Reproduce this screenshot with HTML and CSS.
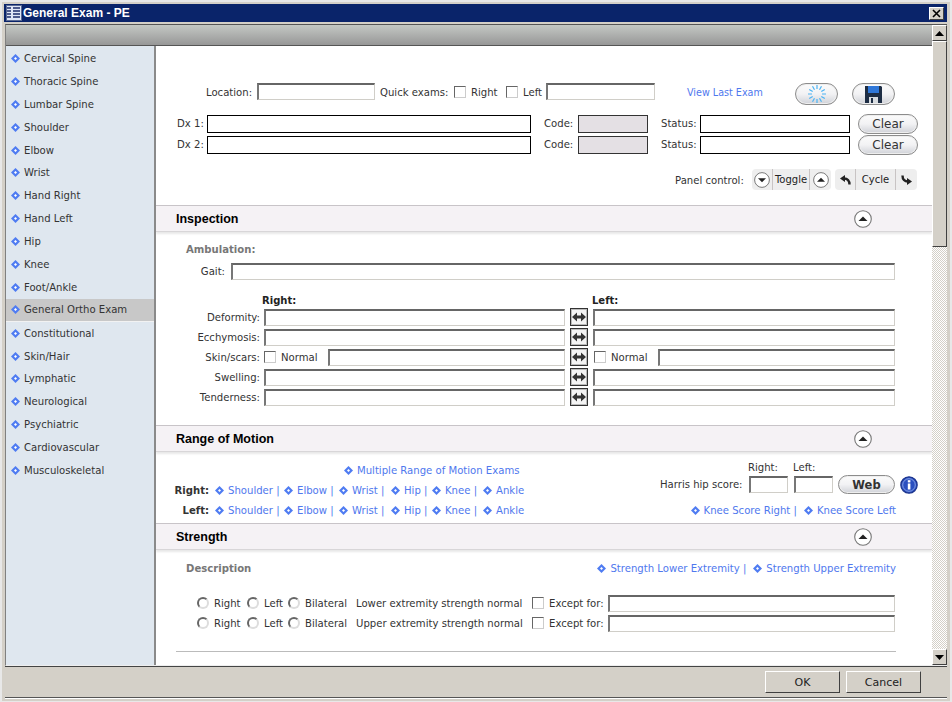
FILE: index.html
```html
<!DOCTYPE html>
<html lang="en">
<head>
  <meta charset="UTF-8" />
  <title>General Exam - PE</title>
  <link rel="stylesheet" href="styles.css">
</head>
<body>
  <svg class="defs" width="0" height="0">
    <symbol id="dia" viewBox="0 0 9 9">
      <path d="M4.5 0 9 4.5 4.5 9 0 4.5z" fill="#4f7cf2"/>
      <path d="M4.5 3 6 4.5 4.5 6 3 4.5z" fill="#fff"/>
    </symbol>
    <symbol id="up" viewBox="0 0 18 18">
      <circle cx="9" cy="9" r="8.3" fill="#fff" stroke="#777" stroke-width="1.1"/>
      <path d="M4.5 11 9 6.5 13.5 11z" fill="#222"/>
    </symbol>
    <symbol id="swap" viewBox="0 0 14 14">
      <path d="M0 7 5 2.500V5.500H9V2.500L14 7 9 11.500V8.500H5V11.500z" fill="#333"/>
    </symbol>
  </svg>

  <div class="window">
    <div class="titlebar">
      <svg class="title-icon" width="16" height="16" viewBox="0 0 16 16">
        <rect width="16" height="16" fill="#5a6a94"/>
        <rect x="1" y="1" width="14" height="14" fill="#dfe6f6"/>
        <path d="M1 3h4M1 6h4M1 9h4M1 12h4M7 3h7M7 6h7M7 9h7M7 12h7" stroke="#1c2c6a" stroke-width="1.6"/>
      </svg>
      <span class="title-text">General Exam - PE</span>
      <div class="close-btn">
        <svg width="9" height="9" viewBox="0 0 9 9"><path d="M1 1 8 8M8 1 1 8" stroke="#000" stroke-width="1.6"/></svg>
      </div>
    </div>

    <div class="client">
      <div class="stage">
        <div class="toolbar"></div>
        <div class="split">
          <ul class="sidebar">
            <li><svg class="dia"><use href="#dia"/></svg>Cervical Spine</li>
            <li><svg class="dia"><use href="#dia"/></svg>Thoracic Spine</li>
            <li><svg class="dia"><use href="#dia"/></svg>Lumbar Spine</li>
            <li><svg class="dia"><use href="#dia"/></svg>Shoulder</li>
            <li><svg class="dia"><use href="#dia"/></svg>Elbow</li>
            <li><svg class="dia"><use href="#dia"/></svg>Wrist</li>
            <li><svg class="dia"><use href="#dia"/></svg>Hand Right</li>
            <li><svg class="dia"><use href="#dia"/></svg>Hand Left</li>
            <li><svg class="dia"><use href="#dia"/></svg>Hip</li>
            <li><svg class="dia"><use href="#dia"/></svg>Knee</li>
            <li><svg class="dia"><use href="#dia"/></svg>Foot/Ankle</li>
            <li class="current"><svg class="dia"><use href="#dia"/></svg>General Ortho Exam</li>
            <li><svg class="dia"><use href="#dia"/></svg>Constitutional</li>
            <li><svg class="dia"><use href="#dia"/></svg>Skin/Hair</li>
            <li><svg class="dia"><use href="#dia"/></svg>Lymphatic</li>
            <li><svg class="dia"><use href="#dia"/></svg>Neurological</li>
            <li><svg class="dia"><use href="#dia"/></svg>Psychiatric</li>
            <li><svg class="dia"><use href="#dia"/></svg>Cardiovascular</li>
            <li><svg class="dia"><use href="#dia"/></svg>Musculoskeletal</li>
          </ul>

          <div class="main">
            <div class="top">
              <div class="row-location">
                <span>Location:</span><input class="field" type="text">
                <span></span>
                <span>Quick exams:</span><span class="check"></span><span>Right</span><span class="check"></span><span>Left</span><input class="field" type="text">
                <span></span>
                <a class="link view-last" href="#">View Last Exam</a>
                <button class="pill icon-pill">
                  <svg width="24" height="20" viewBox="-12 -10 24 20" fill="none" stroke="#4cb4f4" stroke-width="1.2">
                    <path d="M0-9V-5M4.5-7.8 2.5-4.3M7.8-4.5 4.3-2.5M9 0H5M7.8 4.5 4.3 2.5M4.5 7.8 2.5 4.3M0 9V5M-4.5 7.8-2.5 4.3M-7.8 4.5-4.3 2.5M-9 0H-5M-7.8-4.5-4.3-2.5M-4.5-7.8-2.5-4.3"/>
                  </svg>
                </button>
                <span></span>
                <button class="pill icon-pill">
                  <svg width="17" height="17" viewBox="0 0 17 17">
                    <path d="M0 0H16L17 1V17H0z" fill="#1d2d44"/>
                    <rect x="3" y="0" width="11" height="7" fill="#2f77d8"/>
                    <rect x="4" y="11" width="9" height="6" fill="#d8dce0"/>
                    <rect x="6" y="12" width="2" height="5" fill="#1d2d44"/>
                  </svg>
                </button>
              </div>
              <div class="row-dx">
                <span>Dx 1:</span><input class="box" type="text"><span></span>
                <span>Code:</span><input class="box shaded" type="text"><span></span>
                <span>Status:</span><input class="box" type="text"><span></span>
                <button class="pill">Clear</button>
              </div>
              <div class="row-dx">
                <span>Dx 2:</span><input class="box" type="text"><span></span>
                <span>Code:</span><input class="box shaded" type="text"><span></span>
                <span>Status:</span><input class="box" type="text"><span></span>
                <button class="pill">Clear</button>
              </div>
              <div class="panel-control">
                <span class="panel-label">Panel control:</span>
                <div class="seg-group">
                  <span class="seg seg-round"><svg class="flip" width="16" height="16"><use href="#up"/></svg></span>
                  <span class="seg seg-text">Toggle</span>
                  <span class="seg seg-round last"><svg width="16" height="16"><use href="#up"/></svg></span>
                </div>
                <div class="seg-group">
                  <span class="seg seg-round">
                    <svg width="11" height="10" viewBox="0 0 11 10"><path d="M5 0 0 3.500 5 7z" fill="#222"/><path d="M9.500 9.500C9.500 5.500 7.500 3.500 4 3.500" fill="none" stroke="#222" stroke-width="2.400"/></svg>
                  </span>
                  <span class="seg seg-text wide">Cycle</span>
                  <span class="seg seg-round last">
                    <svg width="11" height="10" viewBox="0 0 11 10"><path d="M6 3 11 6.500 6 10z" fill="#222"/><path d="M1.500 .5C1.500 4.500 3.500 6.500 7 6.500" fill="none" stroke="#222" stroke-width="2.400"/></svg>
                  </span>
                </div>
              </div>
            </div>

            <section>
              <header class="section-head"><h2>Inspection</h2><svg class="collapse"><use href="#up"/></svg></header>
              <div class="inspection">
                <div class="hint">Ambulation:</div>
                <div class="row-gait"><span>Gait:</span><input class="field" type="text"></div>
                <div class="row-side-heads"><b>Right:</b><b>Left:</b></div>
                <div class="row-side"><span>Deformity:</span><input class="field" type="text"><span class="swap"><svg width="14" height="14"><use href="#swap"/></svg></span><input class="field" type="text"></div>
                <div class="row-side"><span>Ecchymosis:</span><input class="field" type="text"><span class="swap"><svg width="14" height="14"><use href="#swap"/></svg></span><input class="field" type="text"></div>
                <div class="row-side">
                  <span>Skin/scars:</span>
                  <div class="normal-cell"><span class="check"></span><span>Normal</span><input class="field" type="text"></div>
                  <span class="swap"><svg width="14" height="14"><use href="#swap"/></svg></span>
                  <div class="normal-cell"><span class="check"></span><span>Normal</span><input class="field" type="text"></div>
                </div>
                <div class="row-side"><span>Swelling:</span><input class="field" type="text"><span class="swap"><svg width="14" height="14"><use href="#swap"/></svg></span><input class="field" type="text"></div>
                <div class="row-side"><span>Tenderness:</span><input class="field" type="text"><span class="swap"><svg width="14" height="14"><use href="#swap"/></svg></span><input class="field" type="text"></div>
              </div>
            </section>

            <section>
              <header class="section-head"><h2>Range of Motion</h2><svg class="collapse"><use href="#up"/></svg></header>
              <div class="rom">
                <div class="rom-left">
                  <div class="rom-multi"><a class="link" href="#"><svg class="dia"><use href="#dia"/></svg>Multiple Range of Motion Exams</a></div>
                  <div class="rom-links">
                    <b>Right:</b>
                    <a class="link" href="#"><svg class="dia"><use href="#dia"/></svg>Shoulder |</a>
                    <a class="link" href="#"><svg class="dia"><use href="#dia"/></svg>Elbow |</a>
                    <a class="link" href="#"><svg class="dia"><use href="#dia"/></svg>Wrist |</a>
                    <a class="link" href="#"><svg class="dia"><use href="#dia"/></svg>Hip |</a>
                    <a class="link" href="#"><svg class="dia"><use href="#dia"/></svg>Knee |</a>
                    <a class="link" href="#"><svg class="dia"><use href="#dia"/></svg>Ankle</a>
                  </div>
                  <div class="rom-links">
                    <b>Left:</b>
                    <a class="link" href="#"><svg class="dia"><use href="#dia"/></svg>Shoulder |</a>
                    <a class="link" href="#"><svg class="dia"><use href="#dia"/></svg>Elbow |</a>
                    <a class="link" href="#"><svg class="dia"><use href="#dia"/></svg>Wrist |</a>
                    <a class="link" href="#"><svg class="dia"><use href="#dia"/></svg>Hip |</a>
                    <a class="link" href="#"><svg class="dia"><use href="#dia"/></svg>Knee |</a>
                    <a class="link" href="#"><svg class="dia"><use href="#dia"/></svg>Ankle</a>
                  </div>
                </div>
                <div class="rom-right">
                  <div class="harris-heads"><span>Right:</span><span>Left:</span></div>
                  <div class="harris">
                    <span>Harris hip score:</span><input class="field" type="text"><input class="field" type="text">
                    <button class="pill web">Web</button>
                    <svg width="18" height="18" viewBox="0 0 18 18">
                      <circle cx="9" cy="9" r="8.200" fill="#2a4fc0" stroke="#1c348c" stroke-width="1.200"/>
                      <circle cx="9" cy="9" r="6.300" fill="none" stroke="#9db4ee" stroke-width=".8"/>
                      <rect x="7.800" y="7.500" width="2.600" height="6" fill="#fff"/>
                      <rect x="7.800" y="4.200" width="2.600" height="2.200" fill="#fff"/>
                    </svg>
                  </div>
                  <div class="knee"><a class="link" href="#"><svg class="dia"><use href="#dia"/></svg>Knee Score Right |</a><a class="link" href="#"><svg class="dia"><use href="#dia"/></svg>Knee Score Left</a></div>
                </div>
              </div>
            </section>

            <section>
              <header class="section-head"><h2>Strength</h2><svg class="collapse"><use href="#up"/></svg></header>
              <div class="strength">
                <div class="strength-head">
                  <div class="hint">Description</div>
                  <div class="strength-links"><a class="link" href="#"><svg class="dia"><use href="#dia"/></svg>Strength Lower Extremity |</a><a class="link" href="#"><svg class="dia"><use href="#dia"/></svg>Strength Upper Extremity</a></div>
                </div>
                <div class="row-strength">
                  <span class="radio"></span><span>Right</span><span class="radio"></span><span>Left</span><span class="radio"></span><span>Bilateral</span>
                  <span>Lower extremity strength normal</span><span class="check"></span><span>Except for:</span><input class="field" type="text">
                </div>
                <div class="row-strength">
                  <span class="radio"></span><span>Right</span><span class="radio"></span><span>Left</span><span class="radio"></span><span>Bilateral</span>
                  <span>Upper extremity strength normal</span><span class="check"></span><span>Except for:</span><input class="field" type="text">
                </div>
                <hr class="rule">
              </div>
            </section>
          </div>
        </div>
      </div>

      <div class="scrollbar">
        <div class="sb-btn"><svg width="9" height="5" viewBox="0 0 9 5"><path d="M0 5 4.500 0 9 5z" fill="#000"/></svg></div>
        <div class="sb-thumb"></div>
        <div class="sb-track"></div>
        <div class="sb-btn"><svg width="9" height="5" viewBox="0 0 9 5"><path d="M0 0H9L4.500 5z" fill="#000"/></svg></div>
      </div>
    </div>

    <div class="footer">
      <button class="win-btn">OK</button>
      <button class="win-btn">Cancel</button>
    </div>
  </div>
</body>
</html>
```

FILE: styles.css
```css
* { box-sizing: border-box; }
html, body { margin: 0; padding: 0; }
body { width: 952px; height: 702px; overflow: hidden; background: #fff; font-family: "DejaVu Sans", sans-serif; font-size: 10.1px; color: #333; }
.defs { position: absolute; }
.window { width: 952px; height: 702px; background: #d4d0c8; border: 1px solid #e8e8e8; border-width: 2px 2px 1px 2px; padding: 2px 3px 3px 2px; display: flex; flex-direction: column; }

.titlebar { height: 18px; flex: none; background: #0a246a; display: flex; align-items: center; padding: 0 3px 0 2px; color: #fff; }
.title-icon { margin-right: 1px; }
.title-text { font: bold 12px "Liberation Sans", sans-serif; flex: 1; }
.close-btn { width: 15px; height: 13px; background: #d4d0c8; border: 1px solid; border-color: #fff #404040 #404040 #fff; display: flex; align-items: center; justify-content: center; }

.client { flex: 1; min-height: 0; display: flex; margin: 2px 0 0 1px; border-top: 1px solid #555; border-left: 1px solid #808080; border-bottom: 1px solid #eee; }
.stage { width: 926px; display: flex; flex-direction: column; min-height: 0; }
.toolbar { height: 21px; flex: none; background: linear-gradient(#c4c8c4, #979797); border-bottom: 1px solid #555; }
.split { flex: 1; min-height: 0; display: flex; }

.sidebar { width: 150px; flex: none; margin: 0; padding: 1px 0 0; list-style: none; background: #dfe7ef; border-right: 2px solid #8a8a8a; }
.sidebar li { height: 22.9px; display: flex; align-items: center; padding-left: 5px; white-space: nowrap; }
.sidebar li .dia { margin-right: 4px; }
.sidebar li.current { background: #c8c8c8; border-bottom: 1px solid #f2f2f2; }
.dia { width: 9px; height: 9px; flex: none; margin-right: 4px; }

.main { flex: 1; min-width: 0; background: #fff; overflow: hidden; }
.top { height: 159px; padding-top: 37px; }
.link { color: #4f78ee; text-decoration: none; white-space: nowrap; display: inline-flex; align-items: center; }
.view-last { font-size: 9.6px; margin-top: 1px; }
input { display: block; margin: 0; padding: 0; background: #fff; }
.field { height: 17px; width: 100%; border: 1px solid; border-width: 2px 1px 1px 2px; border-color: #666 #d0cec8 #d0cec8 #777; }
.box { height: 18px; width: 100%; border: 1px solid #000; }
.shaded { background: #e4e0e4; border-color: #333; }
.check { width: 12px; height: 12px; background: #fff; border: 1px solid; border-color: #666 #ccc #ccc #666; }
.radio { width: 12px; height: 12px; border-radius: 50%; background: #fff; border: 2px solid; border-color: #666 #ddd #ddd #666; }
.pill { height: 20px; padding: 0; border: 1px solid #8c8c8c; border-radius: 10px; background: linear-gradient(#fbfbfb, #f2f2f4 50%, #d0d2d8); font: 12px "DejaVu Sans", sans-serif; color: #333; display: flex; align-items: center; justify-content: center; box-shadow: inset 0 0 0 1px #eee; }
.icon-pill { height: 22px; border-radius: 11px; border-width: 1.5px; margin-bottom: -5px; }

.row-location { display: grid; grid-template-columns: 51px 118px 5px 74px 17px 35px 17px 23px 109px 32px 108px 43px 14px 43px; align-items: center; padding-left: 50px; height: 17px; white-space: nowrap; }
.row-location > span { margin-top: 1px; }
.row-dx { display: grid; grid-template-columns: 30px 324px 13px 34px 70px 13px 39px 150px 8px 60px; align-items: center; padding-left: 21px; height: 20px; margin-top: 1px; white-space: nowrap; }
.row-dx > span { margin-top: -2px; }
.row-location + .row-dx { margin-top: 14px; }
.panel-control { display: flex; align-items: center; height: 21px; margin-top: 14px; padding-left: 519px; white-space: nowrap; }
.panel-label { width: 77px; margin-top: 2px; }
.seg-group { display: flex; height: 21px; background: #eeeeee; border-radius: 4px; }
.seg-group + .seg-group { margin-left: 4px; }
.seg { display: flex; align-items: center; justify-content: center; border-right: 1px solid #c8c4c4; height: 21px; }
.seg.last { border-right: 0; }
.seg-round { width: 21px; }
.seg-text { width: 37px; color: #222; font-size: 10px; }
.seg-text.wide { width: 40px; }
.flip { transform: rotate(180deg); }

.section-head { height: 27px; display: flex; align-items: center; justify-content: space-between; padding: 0 60px 0 20px; background: #f5f2f5; border-top: 1px solid #c8c4c8; border-bottom: 1px solid #d8d6d8; box-shadow: 0 2px 2px #e8e8e8; }
.section-head h2 { margin: 0; font: bold 12.5px "Liberation Sans", sans-serif; color: #000; }
.collapse { width: 18px; height: 18px; }
.hint { font-weight: bold; color: #777; }

.inspection { height: 193px; padding: 12px 0 0 30px; }
.row-gait { display: grid; grid-template-columns: 39px 664px; column-gap: 6px; align-items: center; height: 17px; margin-top: 8px; }
.row-gait span { text-align: right; }
.row-side-heads { display: grid; grid-template-columns: 330px auto; padding-left: 76px; margin-top: 13px; height: 14px; align-items: center; color: #222; }
.row-side-heads b { font-size: 10px; }
.row-side { display: grid; grid-template-columns: 74px 301px 32px 302px; align-items: center; height: 20px; }
.row-side > span:first-child { text-align: right; white-space: nowrap; }
.row-side > .field:nth-child(2), .row-side > .normal-cell:nth-child(2) { margin-left: 4px; width: 301px; }
.swap { width: 18px; height: 18px; margin-left: 9px; border: 1px solid #333; box-shadow: inset 0 0 0 1px #bbb; background: #f4f4f4; display: flex; align-items: center; justify-content: center; }
.normal-cell { display: grid; grid-template-columns: 17px 47px 1fr; align-items: center; }
.swap + .normal-cell { padding-left: 1px; }

.rom { height: 71px; display: flex; justify-content: space-between; padding: 8px 36px 0 0; }
.rom-multi { height: 20px; padding-left: 188px; display: flex; align-items: center; }
.rom-links { display: grid; grid-template-columns: 59px 69px 55px 52px 41px 51px auto; align-items: center; height: 20px; }
.rom-links b { text-align: right; padding-right: 6px; color: #333; }
.rom-right { width: 256px; padding-left: 20px; }
.harris-heads { display: flex; height: 15px; padding-left: 88px; align-items: center; }
.harris-heads span { width: 45px; }
.harris { display: grid; grid-template-columns: 89px 39px 45px 62px 23px; align-items: center; height: 19px; white-space: nowrap; }
.harris .field { width: 39px; }
.harris .field + .field { margin-left: 6px; }
.harris svg { margin-left: 5px; }
.web { width: 57px; height: 19px; margin-left: 5px; font-weight: bold; font-size: 11.5px; }
.knee { display: flex; justify-content: flex-end; gap: 7px; height: 20px; margin-top: 6px; align-items: center; }

.strength { padding: 0 0 0 20px; }
.strength-head { display: flex; justify-content: space-between; align-items: center; height: 36px; padding: 0 36px 0 10px; }
.strength-links { display: flex; gap: 7px; }
.row-strength { display: grid; grid-template-columns: 17px 33px 17px 24px 17px 51px 176px 17px 59px 287px; align-items: center; height: 20px; margin-left: 21px; white-space: nowrap; }
.strength-head + .row-strength { margin-top: 7px; }
.rule { margin: 18px 36px 0 0; border: 0; border-top: 1px solid #bbb; }

.scrollbar { width: 15px; flex: none; display: flex; flex-direction: column; }
.sb-btn { height: 16px; flex: none; background: #d4d0c8; border: 1px solid; border-color: #fff #404040 #404040 #fff; display: flex; align-items: center; justify-content: center; }
.sb-thumb { height: 206px; flex: none; background: #d4d0c8; border: 1px solid; border-color: #fff #404040 #404040 #fff; }
.sb-track { flex: 1; background-color: #fff; background-image: conic-gradient(#d4d0c8 25%, #fff 0 50%, #d4d0c8 0 75%, #fff 0); background-size: 2px 2px; }

.footer { height: 32px; flex: none; display: flex; justify-content: flex-end; align-items: center; gap: 6px; padding-right: 26px; margin-left: 1px; border-top: 1px solid #444; border-bottom: 1px solid #555; box-shadow: 0 1px 0 #fff; }
.win-btn { width: 75px; height: 22px; padding: 0; background: #d4d0c8; border: 1px solid; border-color: #fff #404040 #404040 #fff; font: 11px "DejaVu Sans", sans-serif; color: #222; }
```
